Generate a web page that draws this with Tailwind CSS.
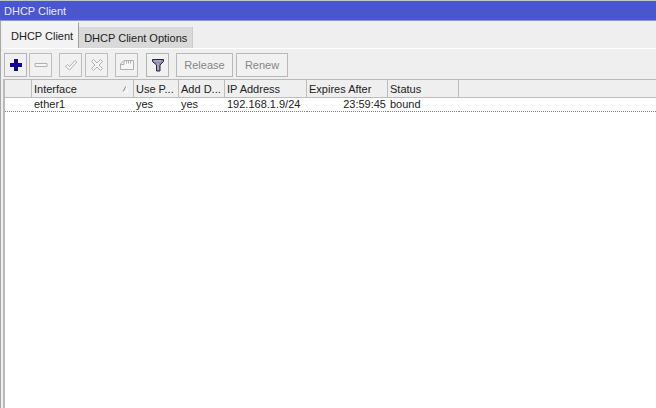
<!DOCTYPE html>
<html lang="en">
<head>
<meta charset="utf-8">
<title>DHCP Client</title>
<script src="https://cdn.jsdelivr.net/npm/@tailwindcss/browser@4"></script>
</head>
<body class="flex h-screen flex-col overflow-hidden border-t border-[#c3c5cf] bg-[#efefef] font-['Liberation_Sans',Arial,sans-serif] text-[11px] leading-[13px] text-[#222]">
  <header class="flex h-5 shrink-0 items-center border-b border-[#8e95dc] bg-[#4956cd] px-1 pt-[2px] text-[#e8eaff]">
    <h1>DHCP Client</h1>
  </header>
  <main class="flex min-h-0 grow flex-col border-l border-[#a8a8a8] pl-[2px]">
    <nav role="tablist" class="flex h-7 shrink-0 items-end border-b border-white">
      <button role="tab" aria-selected="true" class="h-[26px] border-t border-r border-t-[#f8f8f8] border-r-[#a0a0a0] bg-[#f3f3f3] pt-[2px] pr-[5px] pl-2">DHCP Client</button>
      <button role="tab" aria-selected="false" class="h-[21px] border-r border-[#ccc] bg-[#d9d9d9] px-[5px] pt-[2px]">DHCP Client Options</button>
    </nav>
    <div role="toolbar" class="flex h-[30px] shrink-0 items-center pt-px pl-px">
      <button aria-label="Add" class="grid h-6 w-[23px] place-items-center border border-[#b4b4b4] bg-[#f1f1f1]">
        <svg class="size-[14px]" viewBox="0 0 14 14"><path d="M5 1h4v4h4v4H9v4H5V9H1V5h4z" fill="#10106a"/><path d="M6 2h2v4h4v2H8v4H6V8H2V6h4z" fill="#0808a8"/></svg>
      </button>
      <button aria-label="Remove" disabled class="ml-[2px] grid h-6 w-[23px] place-items-center border border-[#bdbdbd] bg-[#f1f1f1]">
        <svg class="size-[14px]" viewBox="0 0 14 14"><path d="M1 5.500h12v3H1z" fill="#f6f6f6" stroke="#b0b0b0"/></svg>
      </button>
      <button aria-label="Enable" disabled class="ml-[7px] grid h-6 w-[23px] place-items-center border border-[#bdbdbd] bg-[#f1f1f1]">
        <svg class="size-[14px]" viewBox="0 0 14 14"><path d="M1.500 8.500L3.500 6.500l2 2 5.500-6 1.800 1.700L5.500 12z" fill="#f6f6f6" stroke="#b0b0b0"/></svg>
      </button>
      <button aria-label="Disable" disabled class="ml-[3px] grid h-6 w-[23px] place-items-center border border-[#bdbdbd] bg-[#f1f1f1]">
        <svg class="size-[14px]" viewBox="0 0 14 14"><path d="M3.500 1.500L7 5l3.500-3.500 2 2L9 7l3.500 3.500-2 2L7 9l-3.500 3.500-2-2L5 7 1.500 3.500z" fill="#f6f6f6" stroke="#b0b0b0"/></svg>
      </button>
      <button aria-label="Comment" disabled class="ml-[7px] grid h-6 w-[23px] place-items-center border border-[#bdbdbd] bg-[#f1f1f1]">
        <svg class="size-[14px]" viewBox="0 0 14 14"><path d="M.5 11.500V6L4 2.500h9.500v9H.5zM.5 6.500H4V3M6.500 2.500v3M8.500 2.500v3M10.500 2.500v3" fill="#f6f6f6" stroke="#b0b0b0"/></svg>
      </button>
      <button aria-label="Filter" class="ml-2 grid h-6 w-[23px] place-items-center border border-[#b4b4b4] bg-[#f1f1f1]">
        <svg class="size-[14px]" viewBox="0 0 14 14"><path d="M1.500 1.500h11v2L9 7v6H5.500V7l-4-3.500z" fill="#8888a8" stroke="#26263f"/><path d="M3 3h7" stroke="#c4c4da"/><path d="M7 5v7" stroke="#c4c4da"/></svg>
      </button>
      <button disabled class="ml-[7px] h-6 w-[57px] border border-[#b8b8b8] bg-[#f1f1f1] pt-px text-[#858585]">Release</button>
      <button disabled class="ml-[3px] h-6 w-[52px] border border-[#b8b8b8] bg-[#f1f1f1] pt-px text-[#858585]">Renew</button>
    </div>
    <section class="min-h-0 grow border-t border-l-2 border-[#bababa] bg-white">
      <table class="w-full table-fixed border-separate border-spacing-0 text-left whitespace-nowrap">
        <colgroup><col class="w-[27px]"><col class="w-[102px]"><col class="w-[45px]"><col class="w-[46px]"><col class="w-[82px]"><col class="w-[81px]"><col class="w-[71px]"><col></colgroup>
        <thead>
          <tr class="h-[18px] bg-[#efefef] *:border-b *:border-[#bdbdbd] *:pt-px *:font-normal">
            <td class="border-r"></td>
            <th class="border-r pl-[2px]"><div class="flex items-center justify-between pr-1">Interface<svg class="size-2" viewBox="0 0 8 8"><path d="M2 7l3-6" stroke="#888" fill="none"/><path d="M5 1l2 6H2" stroke="#fff" fill="none"/></svg></div></th>
            <th class="border-r pl-[2px]">Use P...</th>
            <th class="border-r pl-[2px]">Add D...</th>
            <th class="border-r pl-[2px]">IP Address</th>
            <th class="border-r pl-[2px]">Expires After</th>
            <th class="border-r pl-[2px]">Status</th>
            <td></td>
          </tr>
        </thead>
        <tbody>
          <tr class="h-[14px] *:border-b *:border-dotted *:border-b-[#808080]">
            <td></td>
            <td class="pl-[2px]">ether1</td>
            <td class="pl-[2px]">yes</td>
            <td class="pl-[2px]">yes</td>
            <td class="pl-[2px]">192.168.1.9/24</td>
            <td class="pr-[2px] text-right">23:59:45</td>
            <td class="pl-[2px]">bound</td>
            <td></td>
          </tr>
        </tbody>
      </table>
    </section>
  </main>
</body>
</html>
